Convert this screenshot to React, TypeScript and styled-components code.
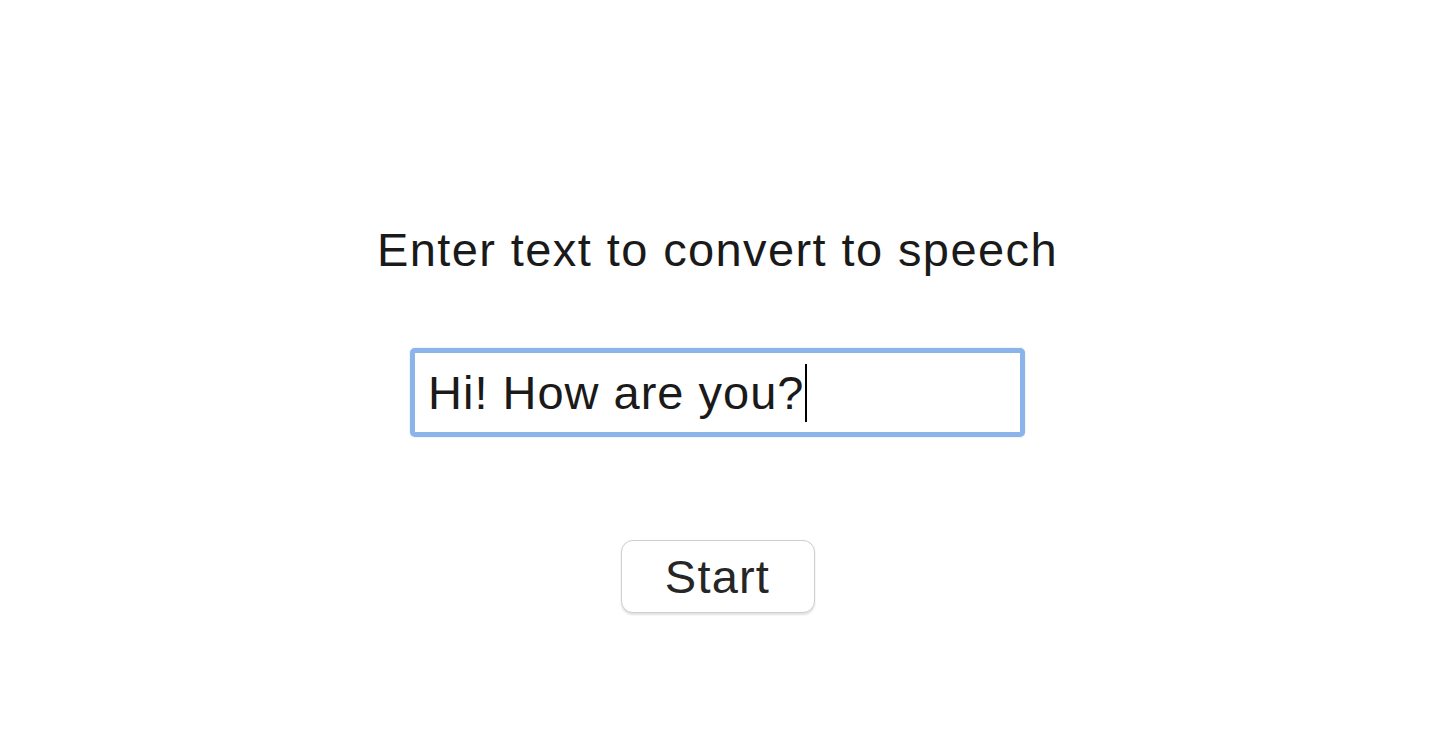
import React from "react";
import styled, { createGlobalStyle } from "styled-components";

const GlobalStyle = createGlobalStyle`
  html, body { margin: 0; padding: 0; background: #ffffff; }
  body { font-family: "Liberation Sans", Arial, Helvetica, sans-serif; color: #222; }
`;

const Page = styled.main`
  width: 1440px;
  height: 750px;
  display: flex;
  flex-direction: column;
  align-items: center;
  box-sizing: border-box;
  padding-top: 217px;
  padding-right: 5px;
`;

const Heading = styled.h1`
  margin: 0;
  font-size: 47px;
  font-weight: 400;
  line-height: 66px;
  color: #1a1a1a;
  letter-spacing: 1.4px;
`;

const Field = styled.div`
  margin-top: 65px;
  width: 615px;
  height: 89px;
  box-sizing: border-box;
  border: 5px solid #8bb5ea;
  border-radius: 5px;
  box-shadow: 0 0 1.5px rgba(139, 181, 234, 0.7);
  background: #fff;
  display: flex;
  align-items: center;
  padding-left: 13px;
  font-size: 47px;
  letter-spacing: 1px;
  color: #1a1a1a;
`;

const Value = styled.span`
  white-space: pre;
`;

const Caret = styled.span`
  display: inline-block;
  width: 2px;
  height: 58px;
  background: #000;
`;

const Button = styled.button`
  margin-top: 103px;
  width: 194px;
  height: 73px;
  box-sizing: border-box;
  border: 1.5px solid #cfcfcf;
  border-radius: 12px;
  background: #fff;
  box-shadow: 0 1.5px 2px rgba(0, 0, 0, 0.12);
  font-family: inherit;
  font-size: 47px;
  letter-spacing: 1.2px;
  color: #262626;
  padding: 0;
  cursor: pointer;
`;

export default function App() {
  return (
    <>
      <GlobalStyle />
      <Page>
        <Heading>Enter text to convert to speech</Heading>
        <Field role="textbox" aria-label="Text to speak">
          <Value>Hi! How are you?</Value>
          <Caret />
        </Field>
        <Button type="button">Start</Button>
      </Page>
    </>
  );
}
